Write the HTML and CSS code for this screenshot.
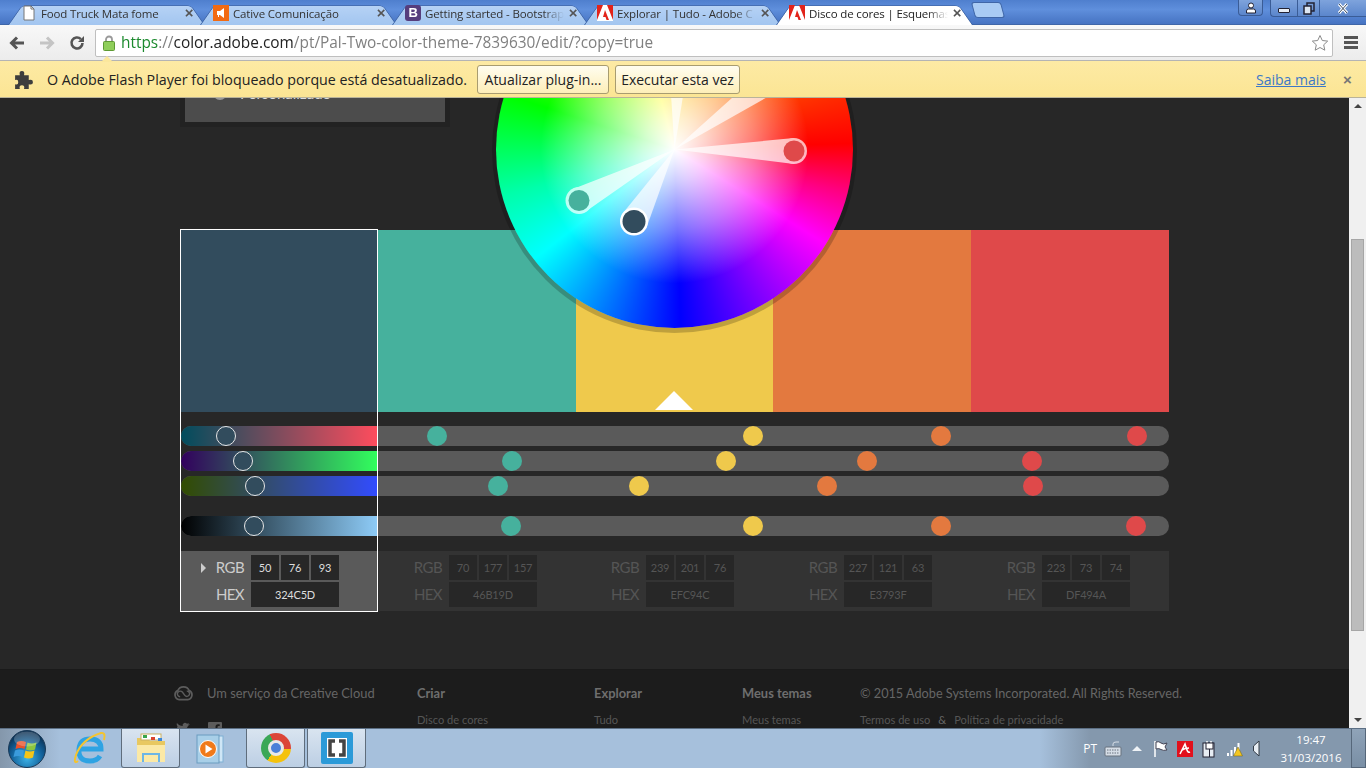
FILE: index.html

```html
<!DOCTYPE html>
<html lang="pt">
<head>
  <meta charset="UTF-8" />
  <title>Disco de cores | Esquemas de cores</title>
  <link rel="stylesheet" href="styles.css">
</head>
<body>
  <div class="tabstrip">
    <div class="tab">
      <svg class="favicon" viewBox="0 0 16 16"><path d="M3 1h7l3 3v11H3z" fill="#fff" stroke="#777"/><path d="M10 1v3h3" fill="none" stroke="#777"/></svg>
      <span class="tabTitle">Food Truck Mata fome</span><span class="tabClose">×</span>
    </div>
    <div class="tab">
      <svg class="favicon" viewBox="0 0 16 16"><rect width="16" height="16" fill="#f26a12"/><path d="M4 6h3l4-3v10l-4-3H6v2H5v-2H4z" fill="#fff"/></svg>
      <span class="tabTitle">Cative Comunicação</span><span class="tabClose">×</span>
    </div>
    <div class="tab">
      <span class="favicon bootstrapIcon">B</span>
      <span class="tabTitle">Getting started - Bootstrap</span><span class="tabClose">×</span>
    </div>
    <div class="tab">
      <svg class="favicon" viewBox="0 0 16 16"><rect width="16" height="16" fill="#fff"/><path d="M0 0h6L0 15zM10 0h6v15zM8 5l4 10H9.500l-1-3H6z" fill="#e2231a"/></svg>
      <span class="tabTitle">Explorar | Tudo - Adobe C</span><span class="tabClose">×</span>
    </div>
    <div class="tab active">
      <svg class="favicon" viewBox="0 0 16 16"><path d="M0 0h6L0 15zM10 0h6v15zM8 5l4 10H9.500l-1-3H6z" fill="#e2231a"/></svg>
      <span class="tabTitle">Disco de cores | Esquemas</span><span class="tabClose">×</span>
    </div>
    <div class="newTab"></div>
    <div class="windowBtns">
      <div class="winBtn userBtn">
        <svg width="12" height="12" viewBox="0 0 12 12"><circle cx="6" cy="3.500" r="2.500" fill="#fff" stroke="#223"/><path d="M1.500 11V9q0-2 2-2h5q2 0 2 2v2z" fill="#fff" stroke="#223"/></svg>
      </div>
      <div class="winGroup">
        <div class="winBtn minBtn"><span class="minIcon"></span></div>
        <div class="winBtn maxBtn">
          <svg width="12" height="13" viewBox="0 0 12 13"><rect x="4" y="1" width="7" height="8" fill="none" stroke="#223" stroke-width="1.500"/><rect x="1" y="4" width="7" height="8" fill="#dde6f2" stroke="#223" stroke-width="1.500"/></svg>
        </div>
        <div class="winBtn closeBtn">
          <svg width="12" height="11" viewBox="0 0 12 11"><path d="M2 1l8 9M10 1l-8 9" stroke="#fff" stroke-width="3"/><path d="M2 1l8 9M10 1l-8 9" stroke="#3a4a60" stroke-width="1"/></svg>
        </div>
      </div>
    </div>
  </div>

  <div class="toolbar">
    <svg class="navIcon" viewBox="0 0 16 16"><path d="M15 8H3M8 2.500L2.500 8 8 13.500" fill="none" stroke="#555" stroke-width="3"/></svg>
    <svg class="navIcon" viewBox="0 0 16 16"><path d="M1 8h12M8 2.500L13.500 8 8 13.500" fill="none" stroke="#c4c4c4" stroke-width="3"/></svg>
    <svg class="navIcon" viewBox="0 0 16 16"><path d="M13.500 8a5.500 5.500 0 1 1-1.600-3.900" fill="none" stroke="#555" stroke-width="2.600"/><path d="M15 1v6H9z" fill="#555"/></svg>
    <div class="omnibox">
      <svg class="lockIcon" viewBox="0 0 12 16"><path d="M3 7V4.500a3 3 0 0 1 6 0V7" fill="none" stroke="#9a9a9a" stroke-width="1.800"/><rect x="0.500" y="6.500" width="11" height="9" rx="1" fill="#8fce5a" stroke="#5e9a34"/></svg>
      <span class="url"><span class="urlScheme">https</span><span class="urlDim">://</span><span class="urlHost">color.adobe.com</span><span class="urlDim">/pt/Pal-Two-color-theme-7839630/edit/?copy=true</span></span>
      <svg class="starIcon" viewBox="0 0 18 18"><path d="M9 1.500l2.300 5 5.400.6-4 3.700 1.100 5.400L9 13.500l-4.800 2.700 1.100-5.400-4-3.700 5.400-.6z" fill="#fff" stroke="#8a8a8a"/></svg>
    </div>
    <div class="menuIcon"><span></span><span></span><span></span></div>
  </div>

  <div class="infobar">
    <svg class="puzzleIcon" viewBox="0 0 20 20"><path d="M2 6h4.500Q5.500 2 8.500 2t2 4H15v4.500q4-1 4 2t-4 2V19h-4.500q1-3.500-2-3.500t-2 3.500H2v-4.500q3 1 3-2t-3-2z" fill="#3d3d3d"/></svg>
    <span class="infoText">O Adobe Flash Player foi bloqueado porque está desatualizado.</span>
    <button class="infoBtn updateBtn">Atualizar plug-in...</button>
    <button class="infoBtn runBtn">Executar esta vez</button>
    <a class="infoLink">Saiba mais</a>
    <span class="infoClose">×</span>
  </div>

  <div class="viewport">
    <div class="page">
      <div class="editor">
        <div class="ruleMenu">
          <div class="ruleItem"><span class="radio"></span>Personalizado</div>
        </div>

        <div class="wheel">
          <svg class="wheelMarks" viewBox="0 0 357 357">
            <g opacity="0.7" fill="#fff">
              <path d="M178.500 178.500L197 62.100 171 60.900z"/><circle cx="184" cy="61.500" r="13"/>
            </g>
            <g opacity="0.7" fill="#fff">
              <path d="M178.500 178.500L283.600 119.100 268.400 97.900z"/><circle cx="276" cy="108.500" r="13"/>
            </g>
            <g opacity="0.7" fill="#fff">
              <path d="M178.500 178.500L298 167V193z"/><circle cx="298" cy="180" r="13"/>
            </g>
            <circle cx="298" cy="180" r="10.500" fill="#df494a"/>
            <g opacity="0.7" fill="#fff">
              <path d="M178.500 178.500L89.100 241 76.900 218z"/><circle cx="83" cy="229.500" r="13.500"/>
            </g>
            <circle cx="83" cy="229.500" r="10.500" fill="#46b19d"/>
            <path d="M178.500 178.500L150.200 257.400 125.800 243.600z" fill="#fff" opacity="0.7"/>
            <circle cx="138" cy="250.500" r="14" fill="#fff"/>
            <circle cx="138" cy="250.500" r="11.500" fill="#324c5d"/>
          </svg>
        </div>

        <div class="swatches">
          <div class="swatch swatch1"></div>
          <div class="swatch swatch2"></div>
          <div class="swatch swatch3"><span class="baseCaret"></span></div>
          <div class="swatch swatch4"></div>
          <div class="swatch swatch5"></div>
        </div>

        <div class="sliders">
          <div class="track">
            <div class="trackFill fillR"></div>
            <span class="knob" style="left:35px"></span>
            <span class="dot dot2" style="left:246px"></span>
            <span class="dot dot3" style="left:562px"></span>
            <span class="dot dot4" style="left:750px"></span>
            <span class="dot dot5" style="left:946px"></span>
          </div>
          <div class="track">
            <div class="trackFill fillG"></div>
            <span class="knob" style="left:52px"></span>
            <span class="dot dot2" style="left:321px"></span>
            <span class="dot dot3" style="left:535px"></span>
            <span class="dot dot4" style="left:676px"></span>
            <span class="dot dot5" style="left:841px"></span>
          </div>
          <div class="track">
            <div class="trackFill fillB"></div>
            <span class="knob" style="left:64px"></span>
            <span class="dot dot2" style="left:307px"></span>
            <span class="dot dot3" style="left:448px"></span>
            <span class="dot dot4" style="left:636px"></span>
            <span class="dot dot5" style="left:842px"></span>
          </div>
          <div class="track trackLight">
            <div class="trackFill fillL"></div>
            <span class="knob" style="left:63px"></span>
            <span class="dot dot2" style="left:320px"></span>
            <span class="dot dot3" style="left:562px"></span>
            <span class="dot dot4" style="left:750px"></span>
            <span class="dot dot5" style="left:945px"></span>
          </div>
        </div>

        <div class="values">
          <div class="valueCol selected">
            <div class="valueRow"><span class="valueLabel rgbLabel">RGB</span><span class="box">50</span><span class="box">76</span><span class="box">93</span></div>
            <div class="valueRow"><span class="valueLabel">HEX</span><span class="box hexBox">324C5D</span></div>
          </div>
          <div class="valueCol">
            <div class="valueRow"><span class="valueLabel">RGB</span><span class="box">70</span><span class="box">177</span><span class="box">157</span></div>
            <div class="valueRow"><span class="valueLabel">HEX</span><span class="box hexBox">46B19D</span></div>
          </div>
          <div class="valueCol">
            <div class="valueRow"><span class="valueLabel">RGB</span><span class="box">239</span><span class="box">201</span><span class="box">76</span></div>
            <div class="valueRow"><span class="valueLabel">HEX</span><span class="box hexBox">EFC94C</span></div>
          </div>
          <div class="valueCol">
            <div class="valueRow"><span class="valueLabel">RGB</span><span class="box">227</span><span class="box">121</span><span class="box">63</span></div>
            <div class="valueRow"><span class="valueLabel">HEX</span><span class="box hexBox">E3793F</span></div>
          </div>
          <div class="valueCol">
            <div class="valueRow"><span class="valueLabel">RGB</span><span class="box">223</span><span class="box">73</span><span class="box">74</span></div>
            <div class="valueRow"><span class="valueLabel">HEX</span><span class="box hexBox">DF494A</span></div>
          </div>
        </div>

        <div class="selectedFrame"></div>
      </div>

      <div class="footer">
        <div class="footCol brandCol">
          <div class="brandLine">
            <svg class="ccIcon" viewBox="0 0 20 16"><path d="M5.500 15a5 5 0 0 1-1.500-9.500 6.500 6.500 0 0 1 12 0 5 5 0 0 1-1.500 9.500z" fill="none" stroke="#5c5c5c" stroke-width="1.800"/><path d="M6.500 12a3 3 0 1 1 2.300-5l2.600 3.500a2.800 2.800 0 1 0 2-4.500" fill="none" stroke="#5c5c5c" stroke-width="1.500"/></svg>
            <span>Um serviço da Creative Cloud</span>
          </div>
          <div class="socialLine">
            <svg class="twIcon" viewBox="0 0 14 12"><path d="M0 10q3 2 6 1t6-7l2-2-2 .5L13 1l-2 .8Q9 0 7.500 1.500T7 4Q3 4 1 1q-1 2 1 4L1 4.500Q1 7 3 7.500H2Q3 9 4.500 9 2 10.500 0 10z" fill="#5c5c5c"/></svg>
            <svg class="fbIcon" viewBox="0 0 14 14"><rect width="14" height="14" rx="1" fill="#5c5c5c"/><path d="M9.500 14V8.500h1.800l.3-2H9.500V5q0-1 1-1h1.200V2.200H10Q7.500 2.200 7.500 5v1.500H6v2h1.500V14z" fill="#1c1c1c"/></svg>
          </div>
        </div>
        <div class="footCol criarCol"><b class="footHead">Criar</b><a class="footLink">Disco de cores</a></div>
        <div class="footCol exploreCol"><b class="footHead">Explorar</b><a class="footLink">Tudo</a></div>
        <div class="footCol themesCol"><b class="footHead">Meus temas</b><a class="footLink">Meus temas</a></div>
        <div class="footCol legalCol">
          <span class="footHead copyright">© 2015 Adobe Systems Incorporated. All Rights Reserved.</span>
          <div class="legalLinks"><a class="footLink">Termos de uso</a><span class="amp">&amp;</span><a class="footLink">Política de privacidade</a></div>
        </div>
      </div>
    </div>
    <div class="scrollbar">
      <span class="arrowUp"></span>
      <div class="scrollTrack"><div class="scrollThumb"></div></div>
      <span class="arrowDown"></span>
    </div>
  </div>

  <div class="taskbar">
    <div class="startOrb">
      <svg width="42" height="42" viewBox="0 0 42 42">
        <defs>
          <radialGradient id="orbFill" cx="50%" cy="75%" r="70%"><stop offset="0" stop-color="#3db3e8"/><stop offset="0.6" stop-color="#12619a"/><stop offset="1" stop-color="#0a2e50"/></radialGradient>
        </defs>
        <circle cx="21" cy="21" r="18.500" fill="url(#orbFill)" stroke="#1a3a58"/>
        <path d="M11 14q4-2 9 0l-1.500 7q-4-2-9 0z" fill="#e8512a"/>
        <path d="M21.500 14.500q4 2 9 0L29 21.500q-4 2-9 0z" fill="#8cc63f"/>
        <path d="M9 22.500q4-2 9 0L16.500 29q-4-2-9 0z" fill="#3a9bdc"/>
        <path d="M19.500 22.500q4 2 9 0L27 29.500q-4 2-9 0z" fill="#f5c518"/>
        <ellipse cx="21" cy="11" rx="13" ry="7.500" fill="#fff" opacity="0.22"/>
      </svg>
    </div>
    <div class="taskItem">
      <svg width="34" height="36" viewBox="0 0 34 36"><path d="M6 18h22Q28 8 17 8 7 8 6 18q-1 12 11 12 7 0 10-5" fill="none" stroke="#2ea3e3" stroke-width="5"/><path d="M5 30Q0 34 3 24 9 8 28 2q5-1 3 7" fill="none" stroke="#f4c430" stroke-width="2"/></svg>
    </div>
    <div class="taskItem open">
      <svg width="34" height="34" viewBox="0 0 34 34"><path d="M3 7h11l2 3h15v21H3z" fill="#e8c860"/><rect x="7" y="3" width="20" height="6" fill="#fff" stroke="#c9b060"/><rect x="9" y="4" width="4" height="3" fill="#3aa54a"/><rect x="17" y="6" width="4" height="3" fill="#d9442f"/><rect x="24" y="7" width="4" height="3" fill="#3a86d8"/><path d="M3 14h28v17H3z" fill="#fbe9a6"/><path d="M9 31v-8h16v8M9 23h16" fill="none" stroke="#6cb6e6" stroke-width="2"/></svg>
    </div>
    <div class="taskItem mediaItem">
      <svg width="34" height="34" viewBox="0 0 34 34"><rect x="8" y="4" width="22" height="26" fill="#cfe6f6" stroke="#7fb0d4"/><rect x="4" y="3" width="22" height="28" fill="#a8cfe8" stroke="#6a9cc0"/><circle cx="15" cy="17" r="8.500" fill="#f07a1a" stroke="#fff"/><path d="M12.500 12.500l7 4.500-7 4.500z" fill="#fff"/></svg>
    </div>
    <div class="taskItem open">
      <span class="chromeIcon"><span class="chromeEye"></span></span>
    </div>
    <div class="taskItem open">
      <svg width="32" height="32" viewBox="0 0 32 32"><rect width="32" height="32" rx="2" fill="#2b9ad8"/><rect x="6" y="6" width="20" height="20" fill="#fff"/><path d="M14 9H9v14h5M18 9h5v14h-5" fill="none" stroke="#444" stroke-width="3.500"/></svg>
    </div>

    <div class="tray">
      <span class="trayLang">PT</span>
      <svg class="trayIcon" width="18" height="16" viewBox="0 0 18 16"><path d="M9 5V3q0-2 3-2h3" fill="none" stroke="#d5dde6"/><rect x="1" y="6" width="16" height="9" rx="1" fill="#d5dde6" stroke="#68727e"/><path d="M3 9h12M3 12h12" stroke="#68727e" stroke-dasharray="1.500 1"/></svg>
      <span class="trayCaret"></span>
      <svg class="trayIcon flagIcon" width="16" height="18" viewBox="0 0 16 18"><path d="M2 1v16" stroke="#fff" stroke-width="1.500"/><path d="M3 2q3-1 5 1t6 0l-2 4 2 3q-4 1-6-.5T3 9z" fill="#fff" stroke="#445"/></svg>
      <svg class="trayIcon" width="16" height="16" viewBox="0 0 16 16"><rect width="16" height="16" fill="#e2101c"/><path d="M3 13L8 3l2 6q1 3 3 2M5 9q3-2 7-2" fill="none" stroke="#fff" stroke-width="1.600"/></svg>
      <svg class="trayIcon" width="15" height="18" viewBox="0 0 15 18"><rect x="1" y="3" width="11" height="14" fill="#e7edf3" stroke="#223"/><path d="M5 3V1M9 3V1" stroke="#fff" stroke-width="1.500"/><rect x="4" y="3" width="7" height="6" fill="#fff" stroke="#223"/><path d="M7.500 9v8" stroke="#223"/></svg>
      <svg class="trayIcon" width="17" height="17" viewBox="0 0 17 17"><path d="M1 13h2v3H1zM4.500 10h2v6h-2zM8 7h2v9H8zM11.500 3h2v7h-2z" fill="#fff"/><path d="M12 7l4.500 9h-9z" fill="#f3c622" stroke="#6b5a10" stroke-width="0.500"/></svg>
      <svg class="trayIcon" width="8" height="17" viewBox="0 0 8 17"><path d="M7 1L1.500 6v5L7 16z" fill="#e8eef4" stroke="#333c47"/></svg>
      <div class="clock"><span>19:47</span><span>31/03/2016</span></div>
      <div class="showDesktop"></div>
    </div>
  </div>
</body>
</html>
```

FILE: styles.css

```css
html, body {
  margin: 0;
  padding: 0;
  height: 100%;
  overflow: hidden;
}
body {
  display: flex;
  flex-direction: column;
  font-family: "Open Sans", Arial, sans-serif;
}

/* browser tabs */
.tabstrip {
  height: 25px;
  flex: none;
  display: flex;
  align-items: flex-end;
  padding-left: 8px;
  box-sizing: border-box;
  background: linear-gradient(#4f7fce, #5f8fdc 40%, #4673c2);
  border-bottom: 1px solid #3f66a8;
}
.tab {
  position: relative;
  width: 197px;
  height: 24px;
  margin-right: -5px;
  margin-bottom: -1px;
  padding: 0 11px 0 13px;
  box-sizing: border-box;
  display: flex;
  align-items: center;
  gap: 4px;
  font-size: 11.500px;
  letter-spacing: -0.150px;
  color: #333;
}
.tab::before {
  content: "";
  position: absolute;
  inset: 0;
  z-index: 0;
  background: linear-gradient(#b6d2f5, #a3c6f0);
  border: 1px solid #3f66a8;
  border-bottom: 0;
  border-radius: 5px 5px 0 0;
  transform: perspective(40px) rotateX(16deg);
  transform-origin: bottom;
}
.tab > * {
  position: relative;
}
.tab.active {
  z-index: 2;
  color: #222;
}
.tab.active::before {
  background: #fff;
}
.favicon {
  width: 16px;
  height: 16px;
  flex: none;
}
.bootstrapIcon {
  background: #563d7c;
  color: #fff;
  border-radius: 3px;
  font: bold 13px/16px "Liberation Sans", sans-serif;
  text-align: center;
}
.tabTitle {
  flex: 1;
  white-space: nowrap;
  overflow: hidden;
  -webkit-mask-image: linear-gradient(90deg, #000 85%, transparent);
  mask-image: linear-gradient(90deg, #000 85%, transparent);
}
.tabClose {
  font: bold 15px/16px "Liberation Sans", sans-serif;
  color: #555;
  width: 10px;
  text-align: center;
}
.newTab {
  width: 28px;
  height: 14px;
  margin: 0 0 6px 5px;
  background: #a9cbf4;
  border: 1px solid #3f66a8;
  border-radius: 3px;
  transform: skewX(15deg);
}
.windowBtns {
  position: absolute;
  top: 0;
  right: 0;
  display: flex;
  gap: 7px;
}
.winBtn {
  height: 16px;
  display: flex;
  align-items: center;
  justify-content: center;
  box-sizing: border-box;
}
.userBtn {
  width: 25px;
  background: linear-gradient(#7ea3dc, #5b86cc);
  border: 1px solid #3a5c96;
  border-top: 0;
  border-radius: 0 0 4px 4px;
}
.winGroup {
  display: flex;
  width: 96px;
  background: linear-gradient(#7ea3dc, #5b86cc);
  border-left: 1px solid #3a5c96;
  border-bottom: 1px solid #3a5c96;
  border-radius: 0 0 0 4px;
  box-sizing: border-box;
}
.minBtn { width: 27px; border-right: 1px solid #3a5c96; }
.maxBtn { width: 22px; border-right: 1px solid #3a5c96; }
.closeBtn { flex: 1; }
.minIcon {
  width: 10px;
  height: 3px;
  margin-top: 4px;
  background: #e8eef6;
  border: 1px solid #223;
  border-radius: 1px;
}

/* address bar */
.toolbar {
  height: 36px;
  flex: none;
  display: flex;
  align-items: center;
  box-sizing: border-box;
  padding-left: 9px;
  background: linear-gradient(#f8f8f8, #ececec);
  border-bottom: 1px solid #b4b4b4;
}
.navIcon {
  width: 16px;
  height: 16px;
  margin-right: 14px;
  flex: none;
}
.omnibox {
  position: relative;
  width: 1238px;
  height: 28px;
  margin-left: -4px;
  box-sizing: border-box;
  padding: 0 3px 0 7px;
  display: flex;
  align-items: center;
  background: #fff;
  border: 1px solid #bfbfbf;
  border-radius: 2px;
}
.lockIcon {
  width: 12px;
  height: 16px;
  flex: none;
  margin-right: 6px;
}
.omnibox::after {
  content: "";
  position: absolute;
  left: 5px;
  bottom: -6px;
  border: 6px solid transparent;
  border-top: 0;
  border-bottom-color: #fbe79c;
}
.url {
  flex: 1;
  margin-top: -1px;
  font-size: 15.400px;
  white-space: nowrap;
}
.urlScheme { color: #1c8a2e; }
.urlDim { color: #808080; }
.urlHost { color: #222; }
.starIcon {
  width: 18px;
  height: 18px;
  flex: none;
}
.menuIcon {
  width: 14px;
  margin-left: 11px;
  display: flex;
  flex-direction: column;
  gap: 2px;
}
.menuIcon span {
  height: 3px;
  background: #555;
}

/* flash warning */
.infobar {
  height: 37px;
  flex: none;
  display: flex;
  align-items: center;
  box-sizing: border-box;
  padding-left: 13px;
  font-size: 14.250px;
  color: #222;
  background: linear-gradient(#fdeaa4, #fbe594);
  border-bottom: 1px solid #b9b39a;
}
.puzzleIcon {
  width: 21px;
  height: 21px;
  flex: none;
  margin-right: 13px;
}
.infoText {
  width: 430px;
  white-space: nowrap;
}
.infoBtn {
  height: 29px;
  margin-right: 6px;
  padding: 0;
  font: 14px "Open Sans", Arial, sans-serif;
  color: #222;
  background: linear-gradient(#fffdf0, #fdeeb8);
  border: 1px solid #a89c70;
  border-radius: 3px;
}
.updateBtn { width: 132px; }
.runBtn { width: 125px; }
.infoLink {
  margin-left: 510px;
  font-size: 14px;
  color: #3b78c8;
  text-decoration: underline;
}
.infoClose {
  margin-left: 17px;
  font: bold 15px "Liberation Sans", sans-serif;
  color: #777;
}

/* page area */
.viewport {
  flex: 1;
  min-height: 0;
  display: flex;
  overflow: hidden;
}
.page {
  flex: 1;
  display: flex;
  flex-direction: column;
  min-width: 0;
  background: #272727;
  font-family: Lato, "Open Sans", sans-serif;
}
.editor {
  position: relative;
  flex: 1;
  padding: 132px 0 0 181px;
  overflow: hidden;
}
.ruleMenu {
  position: absolute;
  left: 180px;
  top: -30px;
  width: 260px;
  height: 49px;
  background: #4c4c4c;
  border: 5px solid #222;
}
.ruleItem {
  position: absolute;
  left: 28px;
  top: 11px;
  display: flex;
  align-items: center;
  gap: 13px;
  font-size: 15px;
  color: #ddd;
}
.radio {
  width: 10px;
  height: 10px;
  border: 2px solid #999;
  border-radius: 50%;
}
.wheel {
  position: absolute;
  z-index: 3;
  left: 496px;
  top: -127px;
  width: 357px;
  height: 357px;
  border-radius: 50%;
  box-shadow: 0 1px 0 4px rgba(0, 0, 0, 0.2);
  background:
    radial-gradient(circle closest-side, #fff 0, rgba(255, 255, 255, 0.8) 18%, rgba(255, 255, 255, 0.45) 45%, rgba(255, 255, 255, 0) 75%),
    conic-gradient(#ffd000 0deg, #ff8000 40deg, #f00 88deg, #ff0080 104deg, #f0f 122deg, #80f 148deg, #00f 178deg, #0080ff 205deg, #0ff 232deg, #0fa 255deg, #0f0 288deg, #ff0 345deg, #ffd000 360deg);
}
.wheelMarks {
  display: block;
  width: 100%;
  height: 100%;
}
.swatches {
  display: grid;
  grid-template-columns: 197px 198px 197px 198px 198px;
  width: 988px;
  height: 182px;
}
.swatch {
  position: relative;
}
.swatch1 { background: #324c5d; }
.swatch2 { background: #46b19d; }
.swatch3 { background: #efc94c; }
.swatch4 { background: #e3793f; }
.swatch5 { background: #df494a; }
.baseCaret {
  position: absolute;
  left: 79px;
  bottom: 2px;
  border: 19px solid transparent;
  border-top: 0;
  border-bottom-color: #fff;
}
.sliders {
  width: 988px;
  margin-top: 14px;
  display: flex;
  flex-direction: column;
  gap: 5px;
}
.track {
  position: relative;
  height: 20px;
  border-radius: 10px;
  background: #5a5a5a;
}
.trackLight {
  margin-top: 15px;
}
.trackFill {
  width: 197px;
  height: 100%;
  border-radius: 10px 0 0 10px;
}
.fillR { background: linear-gradient(90deg, #004c5d, #ff4c5d); }
.fillG { background: linear-gradient(90deg, #32005d, #32ff5d); }
.fillB { background: linear-gradient(90deg, #324c00, #324cff); }
.fillL { background: linear-gradient(90deg, #000, #324c5d 37%, #8eccf8); }
.knob, .dot {
  position: absolute;
  top: 0;
  width: 20px;
  height: 20px;
  border-radius: 50%;
  box-sizing: border-box;
}
.knob {
  background: #324c5d;
  border: 1.500px solid #e6e6e6;
}
.dot2 { background: #46b19d; }
.dot3 { background: #efc94c; }
.dot4 { background: #e3793f; }
.dot5 { background: #df494a; }
.values {
  width: 988px;
  height: 60px;
  margin-top: 15px;
  display: grid;
  grid-template-columns: 198px 197px 198px 198px 197px;
  background: #333;
}
.valueCol {
  padding-top: 4px;
  color: #555;
}
.valueCol.selected {
  margin-right: 1px;
  background: #5a5a5a;
  color: #ccc;
}
.valueRow {
  display: flex;
  gap: 2px;
  height: 25px;
  margin-bottom: 2px;
}
.valueLabel {
  position: relative;
  width: 63px;
  margin-right: 5px;
  font-size: 15px;
  line-height: 25px;
  letter-spacing: -0.600px;
  text-align: right;
}
.rgbLabel::before {
  content: "";
  position: absolute;
  left: 20px;
  top: 8px;
  border: 5px solid transparent;
  border-right: 0;
  border-left-color: #ccc;
}
.box {
  width: 28px;
  background: #272727;
  font-size: 11px;
  line-height: 25px;
  letter-spacing: -0.200px;
  text-align: center;
  color: #555;
}
.hexBox {
  width: 88px;
}
.selected .box {
  color: #ddd;
}
.selectedFrame {
  position: absolute;
  left: 180px;
  top: 131px;
  width: 196px;
  height: 381px;
  border: 1px solid #fff;
}

.footer {
  height: 59px;
  flex: none;
  box-sizing: border-box;
  display: flex;
  padding: 15px 0 0 174px;
  background: #1c1c1c;
  border-top: 1px solid #1a1a1a;
  font-size: 12.900px;
  color: #666;
  overflow: hidden;
}
.footCol {
  display: flex;
  flex-direction: column;
}
.brandCol { width: 243px; }
.criarCol { width: 177px; }
.exploreCol { width: 148px; }
.themesCol { width: 118px; }
.brandLine {
  display: flex;
  align-items: center;
  gap: 14px;
  height: 17px;
}
.ccIcon {
  width: 19px;
  height: 16px;
  flex: none;
}
.socialLine {
  display: flex;
  align-items: flex-start;
  gap: 18px;
  margin: 21px 0 0 2px;
}
.twIcon { width: 14px; height: 12px; }
.fbIcon { width: 14px; height: 14px; }
.footHead {
  height: 17px;
  line-height: 17px;
  color: #6e6e6e;
}
.copyright {
  font-weight: normal;
  font-size: 12.700px;
  color: #666;
}
.footLink {
  margin-top: 11px;
  font-size: 11.100px;
  line-height: 14px;
  color: #565656;
}
.legalLinks {
  display: flex;
  gap: 8px;
}
.amp {
  margin-top: 11px;
  font-size: 11.100px;
  line-height: 14px;
}

.scrollbar {
  width: 17px;
  flex: none;
  display: flex;
  flex-direction: column;
  align-items: center;
  background: #f0f0f0;
}
.arrowUp, .arrowDown {
  flex: none;
  border: 4px solid transparent;
}
.arrowUp {
  margin: 6px 0;
  border-top: 0;
  border-bottom-color: #444;
}
.arrowDown {
  margin: 6px 0;
  border-bottom: 0;
  border-top-color: #444;
}
.scrollTrack {
  flex: 1;
  align-self: stretch;
  padding-top: 125px;
}
.scrollThumb {
  height: 392px;
  margin: 0 2px;
  box-sizing: border-box;
  background: #bcbcbc;
  border: 1px solid #a6a6a6;
}

/* windows taskbar */
.taskbar {
  height: 40px;
  flex: none;
  display: flex;
  box-sizing: border-box;
  border-top: 1px solid #5c6f84;
  background: linear-gradient(90deg, #8497ab 0, #a6c0dc 60px, #a6c0dc 1040px, #8498ad 1090px);
}
.startOrb {
  width: 60px;
  flex: none;
  display: flex;
  align-items: center;
  justify-content: center;
  padding-right: 6px;
  box-sizing: border-box;
}
.taskItem {
  width: 59px;
  margin-right: 2px;
  flex: none;
  display: flex;
  align-items: center;
  justify-content: center;
  box-sizing: border-box;
}
.mediaItem {
  width: 62px;
  padding-right: 6px;
}
.taskItem.open {
  background: linear-gradient(#d9e4f0, #bccfe4);
  border: 1px solid #5f6d7c;
  border-top: 0;
  border-radius: 0 0 3px 3px;
}
.chromeIcon {
  width: 30px;
  height: 30px;
  border-radius: 50%;
  display: flex;
  align-items: center;
  justify-content: center;
  background: conic-gradient(#db4437 0deg, #db4437 95deg, #f4c20d 95deg, #f4c20d 215deg, #3aa757 215deg, #3aa757 335deg, #db4437 335deg);
}
.chromeEye {
  width: 10px;
  height: 10px;
  border-radius: 50%;
  background: #4a80d8;
  border: 3px solid #e8e8e8;
}
.tray {
  margin-left: auto;
  display: flex;
  align-items: center;
  color: #fff;
}
.trayLang {
  font-size: 12px;
  margin-right: 7px;
}
.trayIcon {
  flex: none;
  margin-right: 9px;
}
.flagIcon {
  margin-right: 8px;
}
.trayCaret {
  margin: 0 11px 0 1px;
  border: 5px solid transparent;
  border-top: 0;
  border-bottom-color: #eef2f6;
}
.clock {
  width: 80px;
  margin-left: 2px;
  display: flex;
  flex-direction: column;
  align-items: center;
  gap: 3px;
  font-size: 11.500px;
  line-height: 15px;
}
.showDesktop {
  width: 15px;
  height: 100%;
  box-sizing: border-box;
  background: linear-gradient(#8fa3b8, #7a8fa5);
  border: 1px solid #56677a;
  border-top: 0;
}
```
